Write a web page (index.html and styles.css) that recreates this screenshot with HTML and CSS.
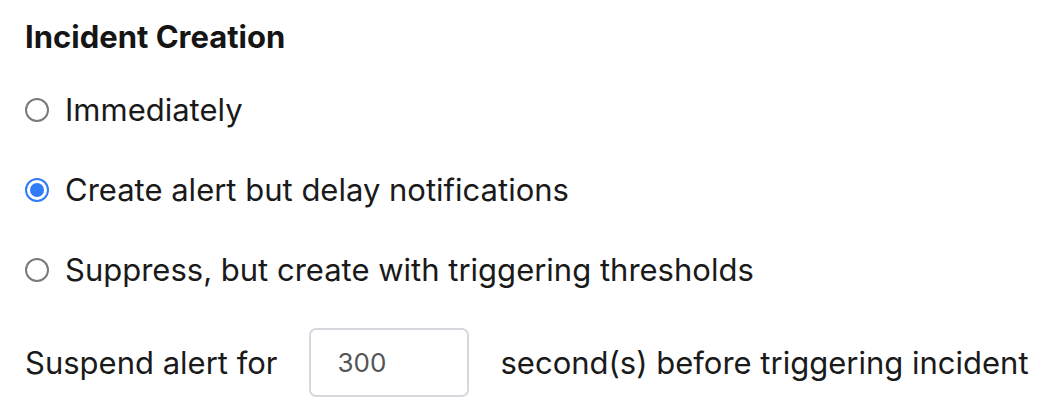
FILE: index.html
```html
<!DOCTYPE html>
<html>
<head>
<meta charset="utf-8">
<link rel="stylesheet" href="styles.css">
</head>
<body>
<section class="panel">
  <h2 class="title">Incident Creation</h2>
  <div class="options">
    <label class="option"><span class="radio"></span><span>Immediately</span></label>
    <label class="option"><span class="radio checked"></span><span>Create alert but delay notifications</span></label>
    <label class="option"><span class="radio"></span><span>Suppress, but create with triggering thresholds</span></label>
  </div>
  <div class="suspend">
    <span>Suspend alert for</span>
    <div class="field">300</div>
    <span>second(s) before triggering incident</span>
  </div>
</section>
</body>
</html>
```
FILE: styles.css
```css
html, body { margin: 0; padding: 0; background: #fff; }
body { font-family: Inter, "Noto Sans", sans-serif; color: #1a1a1a; }
.panel { padding: 17px 25px 0 25px; }
.title { margin: 0; font-size: 31px; font-weight: 700; line-height: 40px; color: #151515; }
.options { display: flex; flex-direction: column; gap: 40px; margin-top: 33px; }
.option { display: flex; align-items: center; gap: 16px; font-size: 31px; line-height: 40px; font-weight: 400; }
.radio { width: 20px; height: 20px; border: 2px solid #7a7a7a; border-radius: 50%; box-sizing: content-box; flex: none; position: relative; }
.radio.checked { border-color: #2f7cf6; }
.radio.checked::after { content: ""; position: absolute; left: 3px; top: 3px; width: 14px; height: 14px; border-radius: 50%; background: #2f7cf6; }
.suspend { display: flex; align-items: center; margin-top: 38px; font-size: 31px; }
.field { width: 160px; height: 69px; box-sizing: border-box; border: 2px solid #d5d9de; border-radius: 7px; margin: 0 31px 0 32px; padding-left: 26px; display: flex; align-items: center; color: #555; font-size: 26px; }
```
